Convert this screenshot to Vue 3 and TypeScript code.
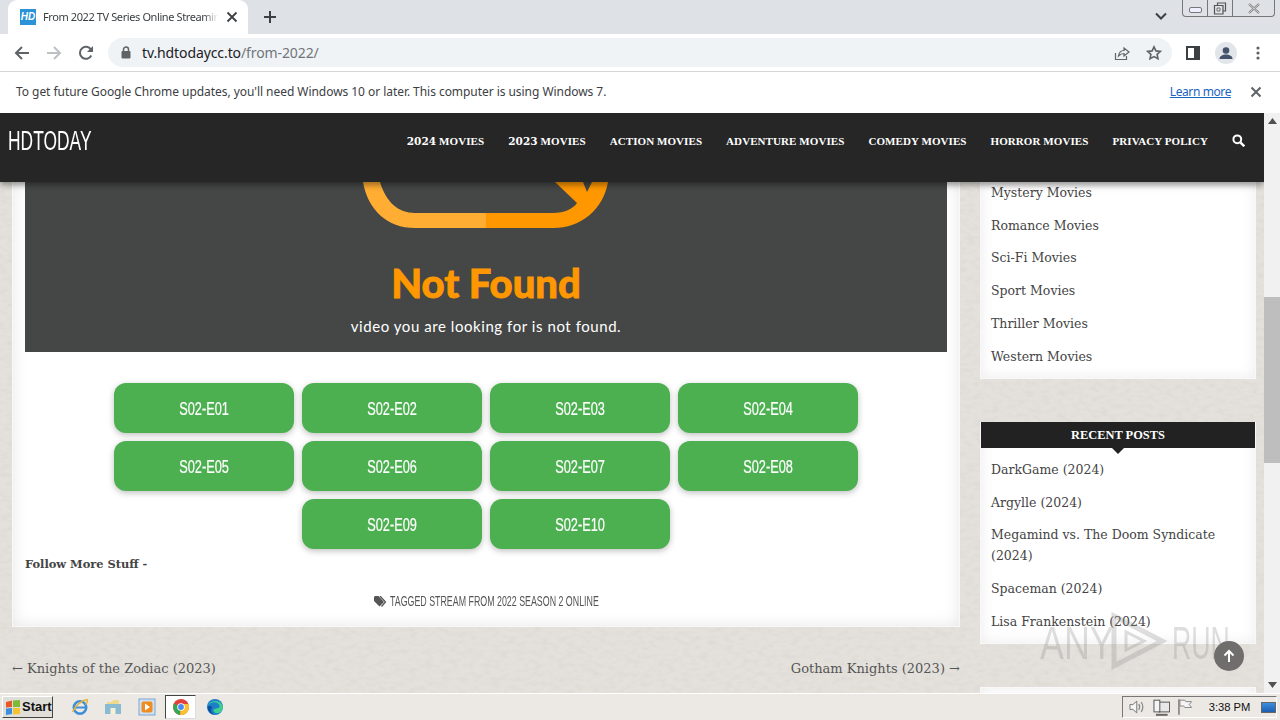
<script setup lang="ts">
interface NavItem { year?: string; label: string }
const navItems: NavItem[] = [
  { year: '2024', label: ' MOVIES' },
  { year: '2023', label: ' MOVIES' },
  { label: 'ACTION MOVIES' },
  { label: 'ADVENTURE MOVIES' },
  { label: 'COMEDY MOVIES' },
  { label: 'HORROR MOVIES' },
  { label: 'PRIVACY POLICY' },
]
const episodes: string[] = ['S02-E01', 'S02-E02', 'S02-E03', 'S02-E04', 'S02-E05', 'S02-E06', 'S02-E07', 'S02-E08', 'S02-E09', 'S02-E10']
const genres: string[] = ['Mystery Movies', 'Romance Movies', 'Sci-Fi Movies', 'Sport Movies', 'Thriller Movies', 'Western Movies']
const posts: string[] = ['DarkGame (2024)', 'Argylle (2024)', 'Megamind vs. The Doom Syndicate (2024)', 'Spaceman (2024)', 'Lisa Frankenstein (2024)']
</script>

<template>
  <div class="screen">
    <header class="tabstrip">
      <div class="tab">
        <span class="favicon">HD</span>
        <span class="tab-title">From 2022 TV Series Online Streamin</span>
        <svg class="tab-x" width="12" height="12" viewBox="0 0 12 12"><path d="M1.500 1.500l9 9M10.500 1.500l-9 9" stroke="#3c4043" stroke-width="1.800" /></svg>
      </div>
      <svg class="plus" width="14" height="14" viewBox="0 0 14 14"><path d="M7 1v12M1 7h12" stroke="#3c4043" stroke-width="2" /></svg>
      <div class="strip-spacer"></div>
      <svg class="chevron" width="12" height="8" viewBox="0 0 12 8"><path d="M1 1.500l5 5 5-5" fill="none" stroke="#3c4043" stroke-width="2" /></svg>
      <div class="caption">
        <span class="cap-btn cap-min"><i></i></span>
        <span class="cap-btn cap-max">
          <svg width="14" height="13" viewBox="0 0 14 13"><path d="M4.500 3V1h8v8h-2M1.500 3.500h8.500v8.500H1.500z" fill="none" stroke="#555" stroke-width="1.200" /><path d="M4 6h3v3H4z" fill="none" stroke="#777" /></svg>
        </span>
        <span class="cap-btn cap-close">
          <svg width="14" height="11" viewBox="0 0 14 11"><path d="M2 1l10 9M12 1L2 10" stroke="#777" stroke-width="2.200" /><path d="M2 1l10 9M12 1L2 10" stroke="#eee" stroke-width="0.800" /></svg>
        </span>
      </div>
    </header>

    <div class="toolbar">
      <svg class="tool" width="16" height="16" viewBox="0 0 16 16"><path d="M15 8H2M8 2L2 8l6 6" fill="none" stroke="#5f6368" stroke-width="2" /></svg>
      <svg class="tool forward" width="16" height="16" viewBox="0 0 16 16"><path d="M1 8h13M8 2l6 6-6 6" fill="none" stroke="#bdc1c6" stroke-width="2" /></svg>
      <svg class="tool reload" width="16" height="16" viewBox="0 0 16 16"><path d="M13.300 10.500A6 6 0 1 1 13 4.600" fill="none" stroke="#5f6368" stroke-width="2" /><path d="M15 1v6H9z" fill="#5f6368" /></svg>
      <div class="omnibox">
        <svg width="10" height="13" viewBox="0 0 10 13"><path d="M2.500 6V3.500a2.500 2.500 0 0 1 5 0V6" fill="none" stroke="#5f6368" stroke-width="1.500" /><rect x="0.500" y="5" width="9" height="7.500" rx="1" fill="#5f6368" /></svg>
        <span class="url"><b>tv.hdtodaycc.to</b>/from-2022/</span>
        <span class="omni-spacer"></span>
        <svg width="16" height="16" viewBox="0 0 16 16"><path d="M1.500 8v6.500h11V11" fill="none" stroke="#5f6368" stroke-width="1.200" /><path d="M4.500 11C5 7.500 7.500 5.500 10 5.500V3l5 4-5 4V8.500C8 8.500 6 9.500 4.500 11z" fill="none" stroke="#5f6368" stroke-width="1.200" /></svg>
        <svg class="star" width="16" height="16" viewBox="0 0 16 16"><path d="M8 1.800l1.900 4.100 4.500.5-3.300 3 .9 4.400L8 11.600l-4 2.200.9-4.400-3.300-3 4.500-.5z" fill="none" stroke="#5f6368" stroke-width="1.600" /></svg>
      </div>
      <svg class="panel" width="14" height="14" viewBox="0 0 14 14"><rect x="1" y="1" width="12" height="12" fill="none" stroke="#3c4043" stroke-width="2" /><rect x="8" y="1" width="5" height="12" fill="#3c4043" /></svg>
      <span class="avatar">
        <svg width="22" height="22" viewBox="0 0 22 22"><circle cx="11" cy="11" r="11" fill="#e2e5ea" /><circle cx="11" cy="8.500" r="3.300" fill="#45526b" /><path d="M4.500 17c0-3 3-4.500 6.500-4.500s6.500 1.500 6.500 4.500z" fill="#45526b" /></svg>
      </span>
      <svg class="dots" width="4" height="14" viewBox="0 0 4 14"><circle cx="2" cy="2" r="1.600" fill="#5f6368" /><circle cx="2" cy="7" r="1.600" fill="#5f6368" /><circle cx="2" cy="12" r="1.600" fill="#5f6368" /></svg>
    </div>

    <div class="infobar">
      <span class="info-text">To get future Google Chrome updates, you'll need Windows 10 or later. This computer is using Windows 7.</span>
      <span class="learn">Learn more</span>
      <svg width="12" height="12" viewBox="0 0 12 12"><path d="M1.500 1.500l9 9M10.500 1.500l-9 9" stroke="#5f6368" stroke-width="2" /></svg>
    </div>

    <div class="viewport">
      <div class="page">
        <nav class="site-nav">
          <span class="logo">HDTODAY</span>
          <div class="nav-links">
            <span v-for="item in navItems" :key="(item.year ?? '') + item.label" class="nav-item"><span v-if="item.year" class="nav-year">{{ item.year }}</span>{{ item.label }}</span>
            <svg width="13" height="13" viewBox="0 0 13 13"><circle cx="5.300" cy="5.300" r="3.900" fill="none" stroke="#fff" stroke-width="2" /><path d="M8.300 8.300l4 4" stroke="#fff" stroke-width="2.400" /></svg>
          </div>
        </nav>
        <div class="columns">
          <svg class="grain" width="1264" height="511" aria-hidden="true">
            <filter id="paper"><feTurbulence type="fractalNoise" baseFrequency="0.12 0.22" numOctaves="3" seed="7" /><feColorMatrix values="0 0 0 0 0.6  0 0 0 0 0.58  0 0 0 0 0.54  0.6 0 0 0 -0.25" /></filter>
            <rect width="1264" height="511" filter="url(#paper)" />
          </svg>
          <main class="main-col">
            <article class="card">
              <div class="video">
                <svg class="nf-logo" width="250" height="46" viewBox="0 0 250 46">
                  <path d="M1 0C6 28 25 46 53 46H124V31H53C36 31 24 20 18 0z" fill="#ffad33" />
                  <path d="M124 31H191C202 31 211 27 215 21L193 0H221L225 10L230 0H246C241 28 219 46 191 46H124z" fill="#ff9800" />
                </svg>
                <div class="nf-title">Not Found</div>
                <div class="nf-sub">video you are looking for is not found.</div>
              </div>
              <div class="episodes">
                <a v-for="ep in episodes" :key="ep" class="episode"><span>{{ ep }}</span></a>
              </div>
              <p class="follow">Follow More Stuff -</p>
              <div class="tags">
                <svg width="13" height="11" viewBox="0 0 13 11"><path d="M0 1v4l5.500 5.500L10 6 4.500 0H1z" fill="#555" /><path d="M6 0l5.500 6-4 4.500" fill="none" stroke="#555" stroke-width="1.300" /></svg>
                <span class="tag-text">TAGGED STREAM FROM 2022 SEASON 2 ONLINE</span>
              </div>
            </article>
            <div class="post-nav">
              <span>← Knights of the Zodiac (2023)</span>
              <span>Gotham Knights (2023) →</span>
            </div>
          </main>
          <aside class="sidebar">
            <section class="widget widget-genres">
              <a v-for="g in genres" :key="g" class="side-link">{{ g }}</a>
            </section>
            <section class="widget widget-posts">
              <h3 class="widget-title">RECENT POSTS</h3>
              <a v-for="p in posts" :key="p" class="side-link">{{ p }}</a>
            </section>
            <section class="widget widget-next"></section>
          </aside>
        </div>
        <div class="watermark">
          <span class="wm-any">ANY</span>
          <svg class="wm-play" width="60" height="62" viewBox="0 0 60 62"><path d="M6 6l48 25-48 25z" fill="none" stroke="#8a8a8a" stroke-width="5" /><path d="M18 22v18l18-9z" fill="none" stroke="#8a8a8a" stroke-width="3" /></svg>
          <span class="wm-run">RUN</span>
        </div>
        <button class="to-top">
          <svg width="14" height="14" viewBox="0 0 14 14"><path d="M7 13V2M2.500 6.500L7 2l4.500 4.500" fill="none" stroke="#fff" stroke-width="2" /></svg>
        </button>
      </div>
      <div class="scrollbar">
        <svg width="9" height="6" viewBox="0 0 9 6"><path d="M4.500 0L9 6H0z" fill="#505050" /></svg>
        <div class="track"><div class="thumb"></div></div>
        <svg width="9" height="6" viewBox="0 0 9 6"><path d="M0 0h9L4.500 6z" fill="#505050" /></svg>
      </div>
    </div>

    <footer class="taskbar">
      <div class="start">
        <svg width="16" height="15" viewBox="0 0 16 15"><path d="M1 2l6-1.500V7L1 7.500z" fill="#e8562a" /><path d="M8 .5L15 0v7H8z" fill="#7fb93a" /><path d="M1 8.500L7 8v6l-6 1z" fill="#3b8fe0" /><path d="M8 8h7v6l-7 .5z" fill="#f4c430" /></svg>
        <span>Start</span>
      </div>
      <span class="task-icon ti-ie">
        <svg width="18" height="18" viewBox="0 0 18 18"><circle cx="9" cy="9.500" r="6.200" fill="none" stroke="#3d8fd8" stroke-width="2.600" /><path d="M3 9.500h12" stroke="#3d8fd8" stroke-width="2" /><path d="M1.500 14C4 8 10 2.500 16 1.500c1.500 1-.3 4-1.500 5" fill="none" stroke="#e3b43c" stroke-width="1.400" /></svg>
      </span>
      <span class="task-icon ti-files">
        <svg width="18" height="18" viewBox="0 0 18 18"><path d="M3 4h5l1-2h6v5H3z" fill="#f0d98a" /><rect x="1" y="6" width="16" height="10" fill="#8bbbd2" /><rect x="6.500" y="10" width="5" height="6" fill="#f5f0d8" /></svg>
      </span>
      <span class="task-icon ti-media">
        <svg width="18" height="18" viewBox="0 0 18 18"><rect x="1" y="1" width="16" height="16" fill="#cfe0f2" stroke="#7fa6cf" /><rect x="3.500" y="3.500" width="11" height="11" rx="2" fill="#ef8b1f" /><path d="M7 5.500l5 3.500-5 3.500z" fill="#fff" /></svg>
      </span>
      <span class="task-chrome">
        <svg width="16" height="16" viewBox="0 0 16 16"><circle cx="8" cy="8" r="8" fill="#e0403a" /><path d="M8 8L1 4.500A8 8 0 0 0 7 15.900z" fill="#35a853" /><path d="M8 8l-1 7.900A8 8 0 0 0 15.500 5H8z" fill="#fbc02d" /><circle cx="8" cy="8" r="3.800" fill="#fff" /><circle cx="8" cy="8" r="2.900" fill="#4a8af0" /></svg>
      </span>
      <span class="task-icon ti-edge">
        <svg width="18" height="18" viewBox="0 0 18 18"><circle cx="9" cy="9" r="8" fill="#1c7fc9" /><path d="M1.500 9C3 4 9 3 12 5.500c2 1.700 2 4 .5 4.500-1.500.5-5 .5-5 2.500s3 3.500 6.500 2A8 8 0 0 0 17 9 8 8 0 0 0 1.500 9z" fill="#3fd08f" /><path d="M6 10c-2 2-.5 6 3 7a8 8 0 0 1-7.500-8C3 7 6 7.500 6 10z" fill="#0c4f9e" /></svg>
      </span>
      <div class="task-spacer"></div>
      <div class="tray">
        <svg class="tray-sound" width="18" height="16" viewBox="0 0 18 16"><path d="M2 5.500h3l4-3.500v12l-4-3.500H2z" fill="#f4f4f4" stroke="#777" /><path d="M11 5q2 3 0 6M13.500 3q3.500 5 0 10" fill="none" stroke="#888" stroke-width="1.200" /></svg>
        <svg class="tray-net" width="18" height="17" viewBox="0 0 18 17"><rect x="6" y="3" width="11" height="10" fill="#e8e8e8" stroke="#555" /><rect x="1" y="1" width="6" height="12" fill="#f4f4f4" stroke="#555" /><path d="M3 16h12" stroke="#666" stroke-width="2" /></svg>
        <svg class="tray-flag" width="17" height="18" viewBox="0 0 17 18"><path d="M2 1v16" stroke="#777" stroke-width="1.500" /><path d="M3 2h5l1 1.500h6l-2.500 3 2.500 3H8L7 8H3z" fill="#f4f4f4" stroke="#888" /></svg>
        <span class="clock">3:38 PM</span>
        <span class="desktop"></span>
      </div>
    </footer>
  </div>
</template>

<style>
html, body { margin: 0; overflow: hidden; }
</style>

<style scoped>
.screen { width: 1280px; height: 720px; display: flex; flex-direction: column; overflow: hidden; font-family: "Noto Sans", sans-serif; background: #fff; }

.tabstrip { height: 34px; flex: none; background: #dee1e6; display: flex; align-items: center; box-sizing: border-box; padding-left: 8px; }
.tab { width: 240px; height: 34px; background: #fff; border-radius: 9px 9px 0 0; display: flex; align-items: center; padding-left: 12px; box-sizing: border-box; }
.favicon { width: 16px; height: 16px; background: #2d93d8; color: #fff; font: italic bold 10px/16px "Liberation Sans", sans-serif; text-align: center; flex: none; }
.tab-title { width: 175px; margin-left: 7px; font: 11px/16px "Noto Sans", sans-serif; letter-spacing: -0.4px; color: #3c4043; white-space: nowrap; overflow: hidden; flex: none; -webkit-mask-image: linear-gradient(90deg, #000 92%, transparent); mask-image: linear-gradient(90deg, #000 92%, transparent); }
.tab-x { margin-left: 8px; flex: none; }
.plus { margin-left: 15px; flex: none; }
.strip-spacer { flex: 1; }
.chevron { margin: 0 15px 0 0; align-self: center; position: relative; top: -1px; flex: none; }
.caption { align-self: flex-start; display: flex; height: 16px; margin-right: 5px; border: 1px solid #777; border-top: none; border-radius: 0 0 4px 4px; flex: none; }
.cap-btn { display: flex; align-items: center; justify-content: center; height: 16px; box-sizing: border-box; }
.cap-min { width: 25px; border-right: 1px solid #777; }
.cap-min i { display: block; width: 11px; height: 4px; border: 1px solid #777; border-radius: 2px; background: #eef; margin-top: 3px; }
.cap-max { width: 25px; border-right: 1px solid #777; }
.cap-close { width: 41px; }

.toolbar { height: 37px; flex: none; background: #fff; display: flex; align-items: center; border-bottom: 1px solid #d6d6d6; box-sizing: content-box; padding-left: 14px; }
.tool { flex: none; }
.forward { margin-left: 16px; }
.reload { margin-left: 16px; }
.omnibox { width: 1064px; height: 29px; margin-left: 14px; border-radius: 15px; background: #f0f3f6; display: flex; align-items: center; box-sizing: border-box; padding: 0 10px 0 13px; flex: none; }
.url { margin-left: 11px; font: 14px/20px "Noto Sans", sans-serif; color: #70757a; letter-spacing: -0.1px; }
.url b { font-weight: 400; color: #202124; }
.omni-spacer { flex: 1; }
.star { margin-left: 16px; }
.panel { margin-left: 14px; flex: none; }
.avatar { margin-left: 15px; flex: none; display: flex; }
.dots { margin-left: 19px; flex: none; }

.infobar { height: 41px; flex: none; background: #fff; display: flex; align-items: center; padding: 0 18px 2px 16px; box-sizing: border-box; font-size: 12px; color: #3c4043; }
.info-text { flex: 1; white-space: nowrap; letter-spacing: -0.05px; }
.learn { color: #1a65c0; text-decoration: underline; margin-right: 19px; letter-spacing: -0.4px; }

.viewport { flex: 1; min-height: 0; display: flex; }
.page { position: relative; width: 1264px; height: 100%; overflow: hidden; display: flex; flex-direction: column; background: #e4e1dc; }
.site-nav { height: 69px; flex: none; background: #262626; display: flex; align-items: center; justify-content: space-between; padding: 0 19px 14px 8px; box-sizing: border-box; box-shadow: 0 3px 6px rgba(0, 0, 0, 0.4); position: relative; z-index: 2; }
.logo { display: inline-block; font: 400 27px/30px "Liberation Sans", sans-serif; color: #fff; width: 83px; white-space: nowrap; transform: scaleX(0.645); transform-origin: left center; }
.nav-links { display: flex; align-items: center; gap: 24px; }
.nav-item { font: 700 11px/16px "Liberation Serif", serif; letter-spacing: 0.08px; color: #fff; white-space: pre; }
.nav-year { font-family: "DejaVu Serif", serif; font-size: 10.500px; }

.columns { position: relative; flex: 1; min-height: 0; display: flex; gap: 20px; padding: 0 8px 0 12px; }
.grain { position: absolute; left: 0; top: 0; }
.main-col { position: relative; width: 948px; flex: none; }
.card { height: 445px; box-sizing: border-box; padding: 0 12px; background: #fff; box-shadow: inset 0 0 16px rgba(0, 0, 0, 0.1); border: 1px solid #f8f8f8; border-top: none; }
.video { height: 170px; background: #454747; display: flex; flex-direction: column; align-items: center; box-sizing: border-box; }
.nf-logo { flex: none; margin-left: 2px; display: block; }
.nf-title { margin-top: 33px; font: 900 40px/44px Lato, sans-serif; color: #ff9800; -webkit-text-stroke: 0.8px #ff9800; }
.nf-sub { margin-top: 12px; font: 400 15px/18px Lato, sans-serif; color: #fff; letter-spacing: 0.56px; }
.episodes { display: flex; flex-wrap: wrap; justify-content: center; gap: 8px; margin-top: 31px; }
.episode { width: 180px; height: 50px; background: #4caf50; border-radius: 12px; color: #fff; font: 400 18px/52px "Liberation Sans", sans-serif; text-align: center; box-shadow: 0 2px 6px rgba(0, 0, 0, 0.25); }
.episode span { display: inline-block; transform: scaleX(0.71); -webkit-text-stroke: 0.2px #fff; }
.follow { margin: 7px 0 0; font: 700 11.400px/16px "DejaVu Serif", serif; color: #444; }
.tags { margin-top: 21px; display: flex; justify-content: center; align-items: center; gap: 3px; color: #555; }
.tag-text { display: inline-block; width: 209px; font: 400 14px/16px "Liberation Sans", sans-serif; white-space: nowrap; transform: scaleX(0.632); transform-origin: left center; }
.post-nav { display: flex; justify-content: space-between; padding-top: 33px; font: 400 13px/18px "DejaVu Serif", serif; color: #555; }

.sidebar { position: relative; width: 276px; flex: none; display: flex; flex-direction: column; }
.widget { background: #fff; box-shadow: inset 0 0 14px rgba(0, 0, 0, 0.08); border: 1px solid #f8f8f8; box-sizing: border-box; flex: none; }
.widget-genres { height: 197px; padding: 0 10px; }
.widget-posts { margin-top: 43px; height: 222px; padding: 0 10px; border-top: none; }
.widget-next { margin-top: 43px; height: 40px; }
.side-link { display: block; font: 400 12.500px/20.700px "DejaVu Serif", serif; color: #444; margin-bottom: 12px; }
.widget-title { margin: 0 -10px 12px; height: 26px; background: #222; color: #fff; font: 700 12.400px/26px "Liberation Serif", serif; text-align: center; position: relative; }
.widget-title::after { content: ""; position: absolute; left: 50%; top: 26px; margin-left: -6px; border: 6px solid transparent; border-top-color: #222; border-bottom: none; }

.watermark { position: absolute; left: 1040px; top: 497px; width: 192px; height: 62px; font: 400 46px/66px "Liberation Sans", sans-serif; color: #8a8a8a; opacity: 0.28; z-index: 3; }
.wm-any { position: absolute; left: 0; top: 0; white-space: nowrap; transform: scaleX(0.78); transform-origin: left center; }
.wm-play { position: absolute; left: 68px; top: 0; }
.wm-run { position: absolute; left: 132px; top: 0; white-space: nowrap; transform: scaleX(0.58); transform-origin: left center; }
.to-top { position: absolute; left: 1214px; top: 528px; width: 30px; height: 30px; border-radius: 50%; background: #6f6e6c; border: none; padding: 0; display: flex; align-items: center; justify-content: center; z-index: 3; }

.scrollbar { width: 16px; flex: none; background: #f1f1f1; display: flex; flex-direction: column; align-items: center; padding: 5px 0; box-sizing: border-box; }
.track { flex: 1; width: 100%; padding-top: 173px; box-sizing: border-box; }
.thumb { height: 166px; background: #bebebe; }

.taskbar { height: 27px; flex: none; background: #ece9e4; border-top: 1px solid #fff; box-sizing: border-box; display: flex; align-items: center; padding-left: 2px; }
.start { width: 51px; height: 22px; box-sizing: border-box; border: 1px solid; border-color: #fff #444 #444 #fff; background: #e0ded9; display: flex; align-items: center; gap: 1px; padding-left: 2px; font: 700 13px/18px "Liberation Sans", sans-serif; color: #111; flex: none; }
.task-icon { display: flex; flex: none; }
.ti-ie { margin-left: 18px; }
.ti-files { margin-left: 15px; }
.ti-media { margin-left: 16px; }
.task-chrome { width: 31px; height: 24px; margin-left: 9px; background: #fff; border: 1px solid; border-color: #444 #ddd #ddd #444; box-sizing: border-box; display: flex; align-items: center; justify-content: center; flex: none; }
.ti-edge { margin-left: 10px; }
.task-spacer { flex: 1; }
.tray { width: 155px; height: 22px; margin-right: 3px; border: 1px solid; border-color: #777 #fff #fff #777; box-sizing: border-box; display: flex; align-items: center; padding-left: 5px; flex: none; }
.tray-net { margin-left: 7px; }
.tray-flag { margin-left: 7px; }
.clock { margin-left: 15px; font: 11.200px/14px "Liberation Sans", sans-serif; color: #111; white-space: nowrap; }
.desktop { width: 15px; height: 11px; margin-left: 11px; background: linear-gradient(#3b8fe0, #1c5db0); border: 1px solid #666; box-sizing: border-box; }
</style>
